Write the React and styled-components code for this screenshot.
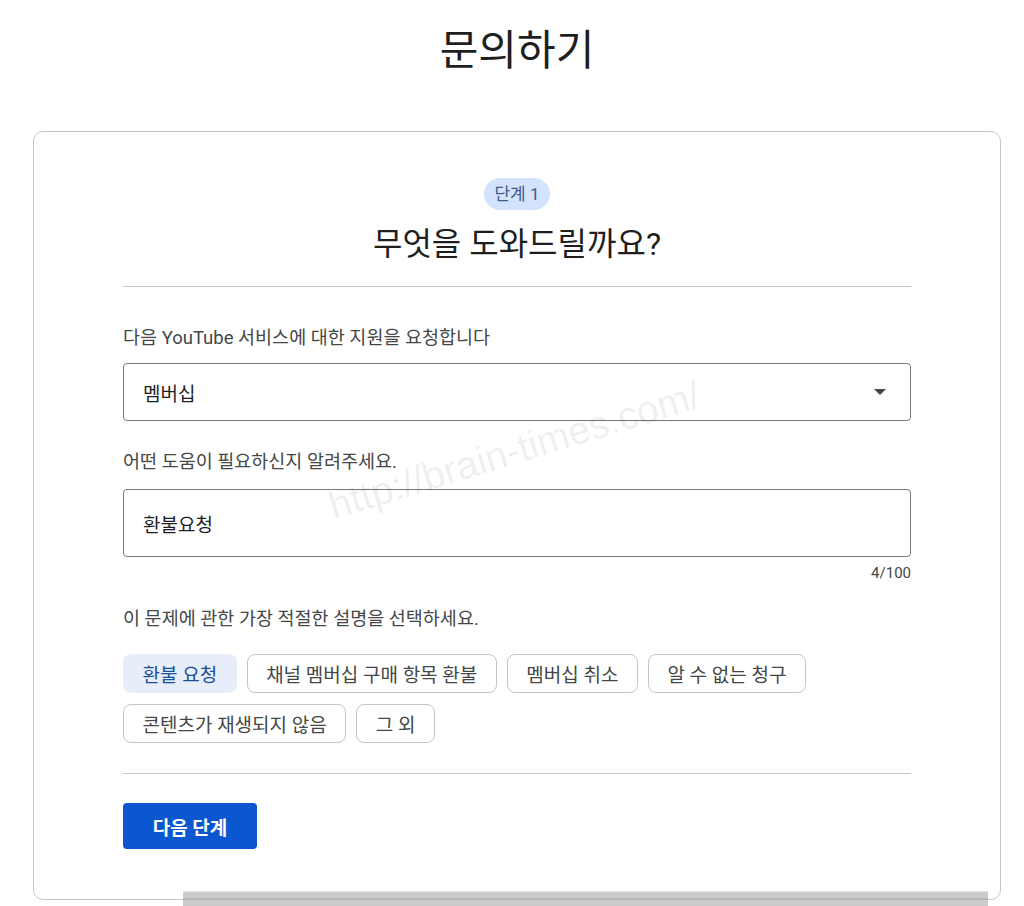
import React, { useState } from 'react';
import styled, { createGlobalStyle } from 'styled-components';

const GlobalStyle = createGlobalStyle`
  body {
    margin: 0;
    background: #fff;
    font-family: Roboto, "Noto Sans CJK KR", "Noto Sans", sans-serif;
    color: #1f1f1f;
  }
`;

const Page = styled.div`
  position: relative;
  width: 1024px;
  height: 906px;
  overflow: hidden;
  padding: 0 23px 0 33px;
  box-sizing: border-box;
`;

const PageTitle = styled.h1`
  margin: 0;
  padding-top: 26px;
  height: 131px;
  box-sizing: border-box;
  text-align: center;
  font-size: 42px;
  line-height: 50px;
  font-weight: 400;
  color: #1f1f1f;
`;

const Card = styled.div`
  border: 1px solid #c7c7c7;
  border-radius: 10px;
  padding: 46px 89px 50px;
  display: flex;
  flex-direction: column;
`;

const Header = styled.div`
  display: flex;
  flex-direction: column;
  align-items: center;
  padding-bottom: 22px;
  border-bottom: 1px solid #c4c7c5;
`;

const StepBadge = styled.span`
  background: #d3e3fd;
  color: #3f5a8a;
  font-size: 17px;
  padding: 0 10px;
  height: 32px;
  line-height: 32px;
  border-radius: 16px;
`;

const Heading = styled.h2`
  margin: 14px 0 0;
  font-size: 32px;
  line-height: 40px;
  font-weight: 400;
  color: #1f1f1f;
`;

const Label = styled.div`
  font-size: 18.5px;
  line-height: 24px;
  color: #444746;
  margin-top: ${(p) => p.top}px;
  margin-bottom: ${(p) => p.bottom}px;
`;

const FieldBox = styled.div`
  display: flex;
  align-items: center;
  justify-content: space-between;
  height: ${(p) => p.h}px;
  border: 1px solid #747775;
  border-radius: 4px;
  padding: 0 19px;
  font-size: 19px;
  color: #1f1f1f;
  box-sizing: border-box;
`;

const Arrow = styled.span`
  width: 0;
  height: 0;
  border-left: 6px solid transparent;
  border-right: 6px solid transparent;
  border-top: 6px solid #444746;
  margin-right: 5px;
`;

const Counter = styled.div`
  text-align: right;
  font-size: 15px;
  line-height: 18px;
  color: #444746;
  margin-top: 7px;
`;

const Chips = styled.div`
  display: flex;
  flex-wrap: wrap;
  gap: 11px 10px;
`;

const Chip = styled.button`
  height: 39px;
  padding: 0 ${(p) => (p.active ? 19.5 : 18.5)}px;
  border-radius: 8px;
  border: ${(p) => (p.active ? 'none' : '1px solid #c4c7c5')};
  background: ${(p) => (p.active ? '#e8eef9' : '#fff')};
  color: ${(p) => (p.active ? '#1a4e9a' : '#444746')};
  font-family: inherit;
  font-size: 19px;
  cursor: pointer;
`;

const Divider = styled.div`
  border-top: 1px solid #c4c7c5;
  margin-top: 30px;
`;

const NextButton = styled.button`
  align-self: flex-start;
  margin-top: 29px;
  width: 134px;
  height: 46px;
  border: none;
  border-radius: 4px;
  background: #0b57d0;
  color: #fff;
  font-family: inherit;
  font-size: 19px;
  font-weight: 700;
  cursor: pointer;
`;

const Watermark = styled.div`
  position: absolute;
  left: 330px;
  top: 485px;
  transform: rotate(-17deg);
  transform-origin: left center;
  font-family: "Liberation Sans", Arial, sans-serif;
  font-size: 39px;
  color: rgba(0, 0, 0, 0.08);
  pointer-events: none;
  white-space: nowrap;
`;

const ScrollBar = styled.div`
  position: absolute;
  left: 183px;
  width: 805px;
  bottom: 0;
  height: 14px;
  background: #cbcbcb;
  border-top: 1px solid #e4e4e4;
  &::after {
    content: '';
    position: absolute;
    left: 0;
    right: 0;
    top: 6px;
    height: 2px;
    background: #b5b5b5;
  }
`;

const chipList = [
  '환불 요청',
  '채널 멤버십 구매 항목 환불',
  '멤버십 취소',
  '알 수 없는 청구',
  '콘텐츠가 재생되지 않음',
  '그 외',
];

export default function App() {
  const [selected, setSelected] = useState(0);
  return (
    <Page>
      <GlobalStyle />
      <PageTitle>문의하기</PageTitle>
      <Card>
        <Header>
          <StepBadge>단계 1</StepBadge>
          <Heading>무엇을 도와드릴까요?</Heading>
        </Header>
        <Label top={39} bottom={13}>다음 YouTube 서비스에 대한 지원을 요청합니다</Label>
        <FieldBox h={58}>
          <span>멤버십</span>
          <Arrow />
        </FieldBox>
        <Label top={29} bottom={15}>어떤 도움이 필요하신지 알려주세요.</Label>
        <FieldBox h={68}>
          <span>환불요청</span>
        </FieldBox>
        <Counter>4/100</Counter>
        <Label top={25} bottom={23}>이 문제에 관한 가장 적절한 설명을 선택하세요.</Label>
        <Chips>
          {chipList.map((c, i) => (
            <Chip key={c} active={i === selected} onClick={() => setSelected(i)}>
              {c}
            </Chip>
          ))}
        </Chips>
        <Divider />
        <NextButton>다음 단계</NextButton>
      </Card>
      <Watermark>http://brain-times.com/</Watermark>
      <ScrollBar />
    </Page>
  );
}
